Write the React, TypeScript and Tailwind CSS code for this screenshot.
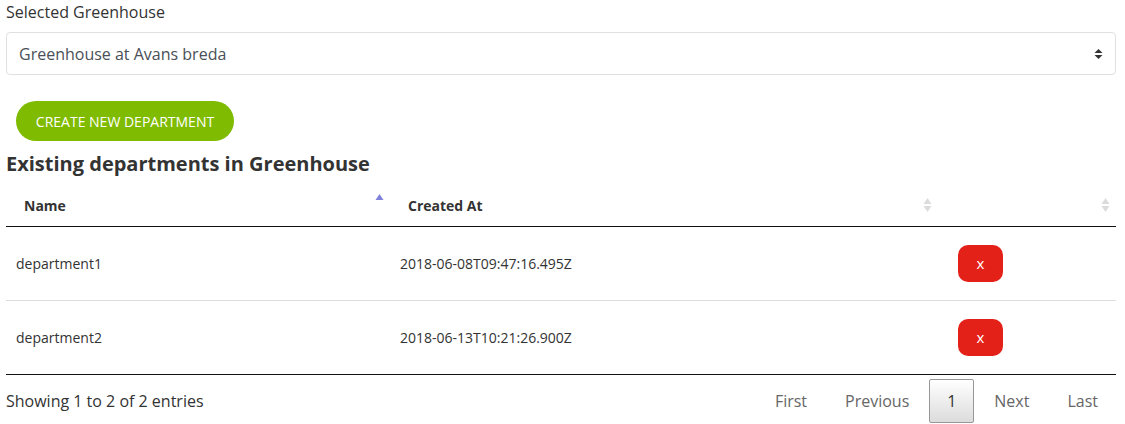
type Department = {
    id: number;
    name: string;
    createdAt: string;
};

const departments: Department[] = [
    { id: 1, name: "department1", createdAt: "2018-06-08T09:47:16.495Z" },
    { id: 2, name: "department2", createdAt: "2018-06-13T10:21:26.900Z" },
];

const SortIcon = ({ active }: { active?: boolean }) => (
    <svg width="9" height="16" viewBox="0 0 9 16" className="shrink-0">
        <path d="M4.5 1 L8.5 7 H0.5 Z" fill={active ? "#8082d9" : "#dcdcdc"} />
        {!active && <path d="M4.5 15 L8.5 9 H0.5 Z" fill="#dcdcdc" />}
    </svg>
);

const App = () => {
    return (
        <div className="w-[1125px] h-[424px] bg-white px-[6px] pr-[9px] text-[#333] font-['Open_Sans',sans-serif] overflow-hidden">
            {/* SELECT */}
            <div className="pt-[1px] text-[16px] leading-[22px] text-[#333]">Selected Greenhouse</div>
            <div className="mt-[9px] h-[43px] flex items-center justify-between border border-[#e0e0e0] rounded-[4px] pl-[12px] pr-[12px]">
                <span className="text-[16px] text-[#495057]">Greenhouse at Avans breda</span>
                <svg width="9" height="12" viewBox="0 0 9 12">
                    <path d="M4.5 1 L8.5 5 H0.5 Z" fill="#333" />
                    <path d="M4.5 11 L8.5 7 H0.5 Z" fill="#333" />
                </svg>
            </div>

            {/* CREATE */}
            <div className="mt-[26px] pl-[10px]">
                <button className="h-[40px] w-[218px] rounded-full bg-[#7fbb00] text-white text-[14px] uppercase">
                    Create new department
                </button>
            </div>

            <h2 className="mt-[9px] text-[20px] font-bold leading-[28px] text-[#333]">Existing departments in Greenhouse</h2>

            {/* TABLE */}
            <table className="w-full mt-[7px] border-collapse text-[14px]">
                <thead>
                    <tr className="h-[41px] border-b border-[#111]">
                        <th className="w-[384px] pl-[18px] pr-[6px] text-left font-bold">
                            <div className="flex items-center justify-between">
                                <span>Name</span>
                                <span className="-mt-[8px]"><SortIcon active /></span>
                            </div>
                        </th>
                        <th className="w-[548px] pl-[18px] pr-[6px] text-left font-bold">
                            <div className="flex items-center justify-between">
                                <span>Created At</span>
                                <SortIcon />
                            </div>
                        </th>
                        <th className="pr-[6px]">
                            <div className="flex items-center justify-end">
                                <SortIcon />
                            </div>
                        </th>
                    </tr>
                </thead>
                <tbody>
                    {departments.map((item, i) => (
                        <tr key={item.id} className={`h-[74px] ${i < departments.length - 1 ? "border-b border-[#ddd]" : "border-b border-[#111]"}`}>
                            <td className="pl-[10px]">{item.name}</td>
                            <td className="pl-[10px]">{item.createdAt}</td>
                            <td className="pl-[20px]">
                                <button className="w-[45px] h-[37px] rounded-[10px] bg-[#e42118] text-white text-[15px] leading-none">
                                    x
                                </button>
                            </td>
                        </tr>
                    ))}
                </tbody>
            </table>

            {/* FOOTER */}
            <div className="flex items-center justify-between h-[49px] pt-[4px]">
                <div className="text-[16px]">Showing 1 to 2 of 2 entries</div>
                <div className="flex items-center text-[16px] text-[#666]">
                    <span className="px-[19px]">First</span>
                    <span className="px-[19px]">Previous</span>
                    <span className="mx-[1px] w-[45px] h-[44px] flex items-center justify-center rounded-[2px] border border-[#979797] bg-gradient-to-b from-white to-[#dcdcdc] text-[#333]">1</span>
                    <span className="px-[19px]">Next</span>
                    <span className="pl-[19px] pr-[18px]">Last</span>
                </div>
            </div>
        </div>
    );
};

export default App;
